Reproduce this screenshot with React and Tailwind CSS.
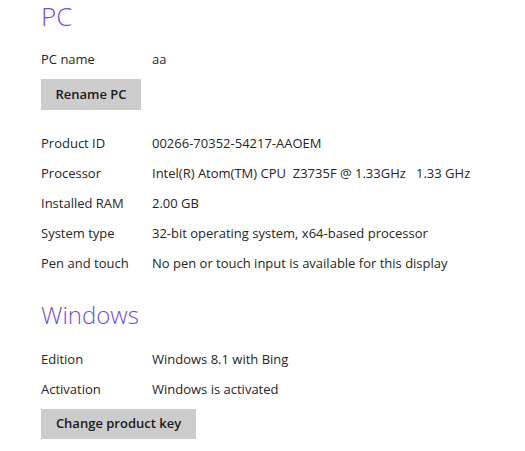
export default function App() {
  const Row = ({ label, value }) => (
    <div className="flex items-center h-[30px] text-[13px] text-[#262626]">
      <div className="w-[111px] shrink-0">{label}</div>
      <div className="whitespace-pre">{value}</div>
    </div>
  );
  return (
    <div className="w-[525px] h-[451px] bg-white pl-[41px] font-['Open_Sans',_'Noto_Sans',_sans-serif]">
      <div className="text-[26px] leading-[32px] font-light text-[#7150d4]">PC</div>
      <div className="mt-[13px]">
        <Row label="PC name" value="aa" />
      </div>
      <button className="mt-[4px] w-[100px] h-[31px] bg-[#cccccc] text-[13px] font-semibold text-[#1a1a1a]">Rename PC</button>
      <div className="mt-[19px]">
        <Row label="Product ID" value="00266-70352-54217-AAOEM" />
        <Row label="Processor" value="Intel(R) Atom(TM) CPU  Z3735F @ 1.33GHz   1.33 GHz" />
        <Row label="Installed RAM" value="2.00 GB" />
        <Row label="System type" value="32-bit operating system, x64-based processor" />
        <Row label="Pen and touch" value="No pen or touch input is available for this display" />
      </div>
      <div className="text-[24px] leading-[32px] font-light text-[#7150d4] mt-[20px]">Windows</div>
      <div className="mt-[14px]">
        <Row label="Edition" value="Windows 8.1 with Bing" />
        <Row label="Activation" value="Windows is activated" />
      </div>
      <button className="mt-[4px] w-[155px] h-[30px] bg-[#cccccc] text-[13px] font-semibold text-[#1a1a1a]">Change product key</button>
    </div>
  );
}
